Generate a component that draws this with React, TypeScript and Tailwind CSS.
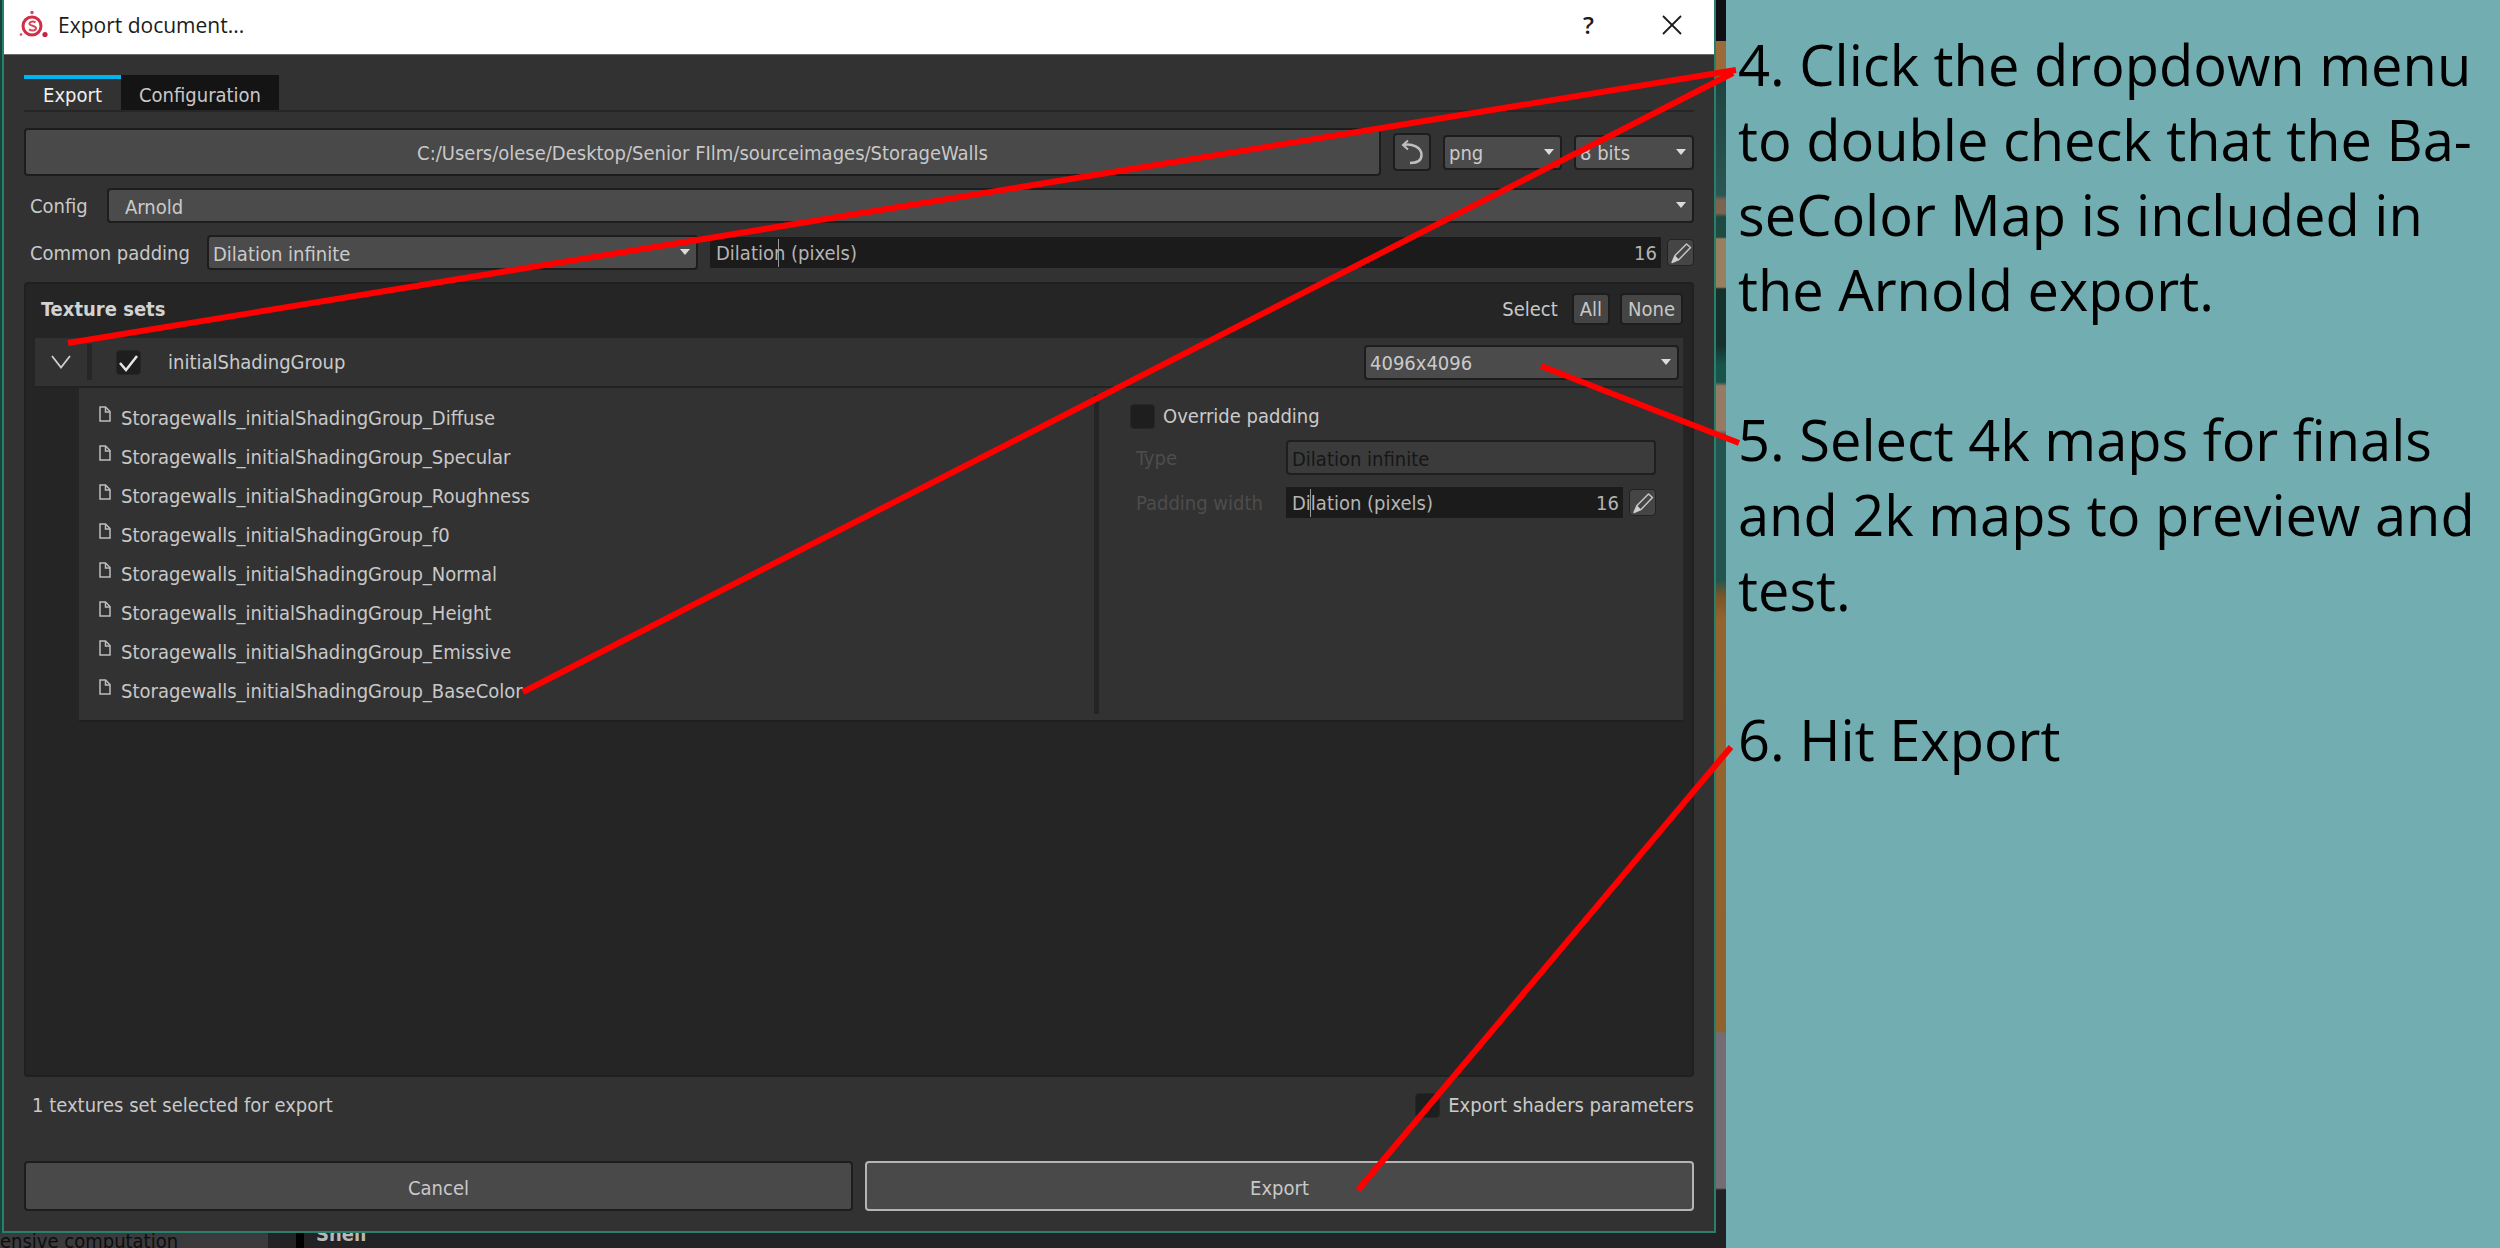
import React, { useId } from 'react';

const textures = ['Diffuse', 'Specular', 'Roughness', 'f0', 'Normal', 'Height', 'Emissive', 'BaseColor'];

const notes = [
  ['4. Click the dropdown menu', 'to double check that the Ba-', 'seColor Map is included in', 'the Arnold export.'],
  ['5. Select 4k maps for finals', 'and 2k maps to preview and', 'test.'],
  ['6. Hit Export'],
];

function Logo() {
  return (
    <svg viewBox="0 0 30 30" className="size-[30px]" fill="none" aria-hidden="true">
      <circle cx="14" cy="16" r="9" stroke="#d02f45" strokeWidth="3" />
      <path d="M17.5 12.5c-2-1.500-6-1-6 1.200s6.500 2 6.500 4.600-4.500 2.700-7 1" stroke="#d8465a" strokeWidth="2" />
      <circle cx="14" cy="2.500" r="1.700" fill="#d8465a" />
      <circle cx="27" cy="24.500" r="2.600" fill="#c8243c" />
      <circle cx="3" cy="24.500" r="1.300" fill="#d8465a" />
    </svg>
  );
}

function PencilIcon() {
  return (
    <svg viewBox="0 0 24 24" className="size-6" aria-hidden="true">
      <path d="M3 21.500 6 14.500 17.500 3l4 3.500L10 18.500z" fill="none" stroke="#c4c4c4" strokeWidth="1.500" strokeLinejoin="round" />
      <path d="M3 21.500 6 14.500 10 18.500z" fill="#d0d0d0" />
    </svg>
  );
}

function FileIcon() {
  return (
    <svg viewBox="0 0 12 16" className="h-4 w-3 shrink-0 -translate-y-1" fill="none" stroke="#bdbdbd" strokeWidth="1.500" aria-hidden="true">
      <path d="M1 1h5.500L11 5.500V15H1z" />
      <path d="M6.500 1v5H11" />
    </svg>
  );
}

type SelectProps = { value: string; label?: string; id?: string; className: string; disabled?: boolean; pad?: string };

function Select({ value, label, id, className, disabled, pad = 'pl-1' }: SelectProps) {
  return (
    <div className={`relative h-[35px] ${className}`}>
      <select
        id={id}
        aria-label={label}
        disabled={disabled}
        className={`block h-full w-full appearance-none rounded border-2 pt-0.5 pr-8 opacity-100 ${pad} ${
          disabled ? 'border-[#1f1f1f] bg-[#3b3b3b] text-[#161616]' : 'border-[#1d1d1d] bg-[#4b4b4b] text-[#cacaca]'
        }`}
      >
        <option>{value}</option>
      </select>
      {!disabled && (
        <svg viewBox="0 0 10 6" className="pointer-events-none absolute top-3.5 right-2 h-1.5 w-2.5" aria-hidden="true">
          <path d="M0 0h10L5 6z" fill="#dcdcdc" />
        </svg>
      )}
    </div>
  );
}

function Slider({ text }: { text: string }) {
  return (
    <div className="flex min-w-0 flex-1 items-center gap-1.5">
      <div className="relative flex h-[31px] flex-1 items-center justify-between bg-[#1b1b1b] pr-1 pl-1.5 text-[#b4b4b4]">
        <span>{text}</span>
        <input
          type="range"
          min="0"
          max="225"
          defaultValue="16"
          aria-label={text}
          className="absolute inset-0 size-full appearance-none bg-transparent [&::-webkit-slider-thumb]:h-7 [&::-webkit-slider-thumb]:w-px [&::-webkit-slider-thumb]:appearance-none [&::-webkit-slider-thumb]:bg-[#9a9a9a]"
        />
        <input type="text" defaultValue="16" aria-label={`${text} value`} className="relative w-8 bg-transparent text-right" />
      </div>
      <button
        type="button"
        aria-label={`Edit ${text}`}
        className="flex size-[27px] items-center justify-center rounded-sm border border-[#222] bg-[#454545]"
      >
        <PencilIcon />
      </button>
    </div>
  );
}

function Check({ checked, label }: { checked?: boolean; label: string }) {
  const id = useId();
  return (
    <div className="flex items-center">
      <span className="relative flex size-[25px]">
        <input
          id={id}
          type="checkbox"
          defaultChecked={checked}
          className="peer size-full appearance-none rounded-sm border border-[#262626] bg-[#1e1e1e]"
        />
        <svg
          viewBox="0 0 25 25"
          className="pointer-events-none absolute inset-0 hidden size-full peer-checked:block"
          fill="none"
          stroke="#e6e6e6"
          strokeWidth="2.500"
          aria-hidden="true"
        >
          <path d="M4 13l6 7L21 6" />
        </svg>
      </span>
      <label htmlFor={id} className={checked ? 'ml-[27px] text-[#cacaca]' : 'ml-2 text-[#cacaca]'}>
        {label}
      </label>
    </div>
  );
}

function TextureSets() {
  return (
    <section className="mt-3 flex flex-1 flex-col rounded border-2 border-[#202020] bg-[#252525] px-[9px]">
      <div className="flex h-[54px] items-center pb-1">
        <h2 className="flex-1 pl-1.5 font-bold text-[#d2d2d2]">Texture sets</h2>
        <span className="mr-3.5">Select</span>
        <button type="button" className="mr-2.5 h-8 rounded-sm border-2 border-[#1d1d1d] bg-[#454545] px-1.5 leading-none">
          All
        </button>
        <button type="button" className="h-8 rounded-sm border-2 border-[#1d1d1d] bg-[#454545] px-1.5 leading-none">
          None
        </button>
      </div>
      <div className="flex h-[50px] items-center border-b-2 border-[#222] bg-[#323232] pr-1">
        <button type="button" aria-label="Collapse initialShadingGroup" className="flex w-[52px] justify-center">
          <svg viewBox="0 0 20 14" className="h-3.5 w-5" fill="none" stroke="#cfcfcf" strokeWidth="1.800" aria-hidden="true">
            <path d="M1 1l9 11.500L19 1" />
          </svg>
        </button>
        <div className="mr-6 h-9 w-[5px] bg-[#262626]" />
        <div className="flex-1">
          <Check checked label="initialShadingGroup" />
        </div>
        <Select value="4096x4096" label="Texture size" className="w-[315px]" />
      </div>
      <div className="ml-11 flex border-b-2 border-[#1f1f1f] bg-[#323232]">
        <ul className="flex-1 pt-2.5 pb-2.5 pl-5">
          {textures.map((name) => (
            <li key={name} className="flex h-[39px] items-center gap-2.5">
              <FileIcon />
              Storagewalls_initialShadingGroup_{name}
            </li>
          ))}
        </ul>
        <div className="my-1.5 w-[5px] bg-[#242424]" />
        <div className="w-[584px] pt-2.5 pr-[27px] pl-[31px]">
          <div className="flex h-9 items-center">
            <Check label="Override padding" />
          </div>
          <div className="mt-1.5 flex items-center">
            <label htmlFor="override-type" className="w-[156px] pl-1.5 text-[#4d4d4d]">
              Type
            </label>
            <Select id="override-type" value="Dilation infinite" disabled className="flex-1" />
          </div>
          <div className="mt-3 flex items-center">
            <span className="w-[156px] pl-1.5 text-[#4d4d4d]">Padding width</span>
            <Slider text="Dilation (pixels)" />
          </div>
        </div>
      </div>
    </section>
  );
}

function ExportDialog() {
  return (
    <main className="flex min-w-0 flex-1 flex-col border-x-2 border-b-2 border-[#28806a] bg-[#323232] text-[#c8c8c8]">
      <header className="flex h-[55px] items-center border-b border-[#6a6a6a] bg-white pr-8 pb-1 pl-3.5 text-[#1c1c1c]">
        <Logo />
        <h1 className="flex-1 pl-2.5 font-['Open_Sans'] text-[21px]">Export document...</h1>
        <button type="button" aria-label="Help" className="mr-[68px] font-['Open_Sans'] text-2xl font-semibold">
          ?
        </button>
        <button type="button" aria-label="Close">
          <svg viewBox="0 0 20 20" className="size-5" stroke="#1c1c1c" strokeWidth="1.800" aria-hidden="true">
            <path d="M1 1l18 18M19 1L1 19" />
          </svg>
        </button>
      </header>
      <div className="flex flex-1 flex-col px-5 pt-5 pb-5">
        <nav role="tablist" className="flex h-[37px] border-b-2 border-[#262626]">
          <button type="button" role="tab" aria-selected="true" className="w-[97px] border-t-4 border-[#00b4f0] text-[#f0f0f0]">
            Export
          </button>
          <button type="button" role="tab" aria-selected="false" className="w-[158px] border-t-4 border-[#141414] bg-[#141414]">
            Configuration
          </button>
        </nav>
        <div className="mt-4 flex items-center">
          <button type="button" className="h-12 flex-1 rounded border-2 border-[#1d1d1d] bg-[#494949] pt-0.5">
            C:/Users/olese/Desktop/Senior FIlm/sourceimages/StorageWalls
          </button>
          <button
            type="button"
            aria-label="Reset path"
            className="mx-3 flex size-[38px] items-center justify-center rounded border-2 border-[#1d1d1d] bg-[#454545]"
          >
            <svg viewBox="0 0 24 26" className="h-[26px] w-6" fill="none" stroke="#bfbfbf" strokeWidth="2.500" aria-hidden="true">
              <path d="M8 1.500L3 6l5 4.500" strokeWidth="2" />
              <path d="M3.500 6C12 4.500 21.500 8 21.500 16c0 5-4 8-11.500 8" />
            </svg>
          </button>
          <Select value="png" label="File format" className="mr-3 w-[119px]" />
          <Select value="8 bits" label="Bit depth" className="w-[120px]" />
        </div>
        <div className="mt-3 flex items-center">
          <label htmlFor="config" className="w-[83px] pl-1.5">
            Config
          </label>
          <Select id="config" value="Arnold" className="flex-1" pad="pl-4" />
        </div>
        <div className="mt-3 flex items-center">
          <label htmlFor="padding" className="w-[183px] pl-1.5">
            Common padding
          </label>
          <Select id="padding" value="Dilation infinite" className="mr-3 w-[491px]" />
          <Slider text="Dilation (pixels)" />
        </div>
        <TextureSets />
        <div className="mt-4 flex h-6 items-center justify-between pl-2">
          <p>1 textures set selected for export</p>
          <Check label="Export shaders parameters" />
        </div>
        <div className="mt-11 grid grid-cols-2 gap-3">
          <button type="button" className="h-[50px] rounded border-2 border-[#1d1d1d] bg-[#494949] pt-1">
            Cancel
          </button>
          <button type="button" className="h-[50px] rounded border-2 border-[#b4b4b4] bg-[#494949] pt-1">
            Export
          </button>
        </div>
      </div>
    </main>
  );
}

export default function App() {
  return (
    <div className="relative flex min-h-screen bg-[#72aeb1] font-['DejaVu_Sans_Condensed','Noto_Sans',sans-serif] text-xl leading-6">
      <div className="flex min-w-0 flex-1 flex-col bg-[#232325]">
        <div className="flex flex-1">
          <div className="w-0.5 bg-[#17433b]" />
          <ExportDialog />
          <div className="w-2.5 bg-[linear-gradient(#110f16_0_41px,#9a6a38_41px_76px,#20433f_80px,#2a5654_195px,#7c6450_200px_213px,#1e4a42_217px_237px,#96805f_239px_287px,#16302c_289px_345px,#17544c_365px_382px,#957a64_386px_430px,#24544f_436px_580px,#7a5428_596px,#94642f_620px,#8f622e_1030px,#756c74_1034px_1188px,#232325_1190px)]" />
        </div>
        <div className="flex h-[15px] items-start overflow-hidden">
          <div className="h-full w-[268px] overflow-hidden bg-[#3b3b3d] leading-4 text-[#0d0d0d]">ensive computation</div>
          <div className="mr-3 ml-7 h-full w-2 bg-black" />
          <div className="flex h-full items-end overflow-hidden font-bold text-[#b8b8b8]">
            <span className="h-[26px]">Shell</span>
          </div>
        </div>
      </div>
      <aside className="flex w-[774px] shrink-0 flex-col gap-[75px] pt-[27px] pl-3 font-['Open_Sans'] text-[56px] leading-[75px] text-black">
        {notes.map((lines) => (
          <p key={lines[0]}>
            {lines.map((line) => (
              <span key={line} className="block whitespace-nowrap">
                {line}
              </span>
            ))}
          </p>
        ))}
      </aside>
      <svg
        viewBox="0 0 2500 1248"
        preserveAspectRatio="none"
        className="pointer-events-none absolute inset-0 size-full"
        stroke="#ff0000"
        strokeWidth="6"
        aria-hidden="true"
      >
        <path d="M68 343L1736 70M1733 73L523 692M1541 366L1739 443M1358 1190L1731 747" />
      </svg>
    </div>
  );
}
